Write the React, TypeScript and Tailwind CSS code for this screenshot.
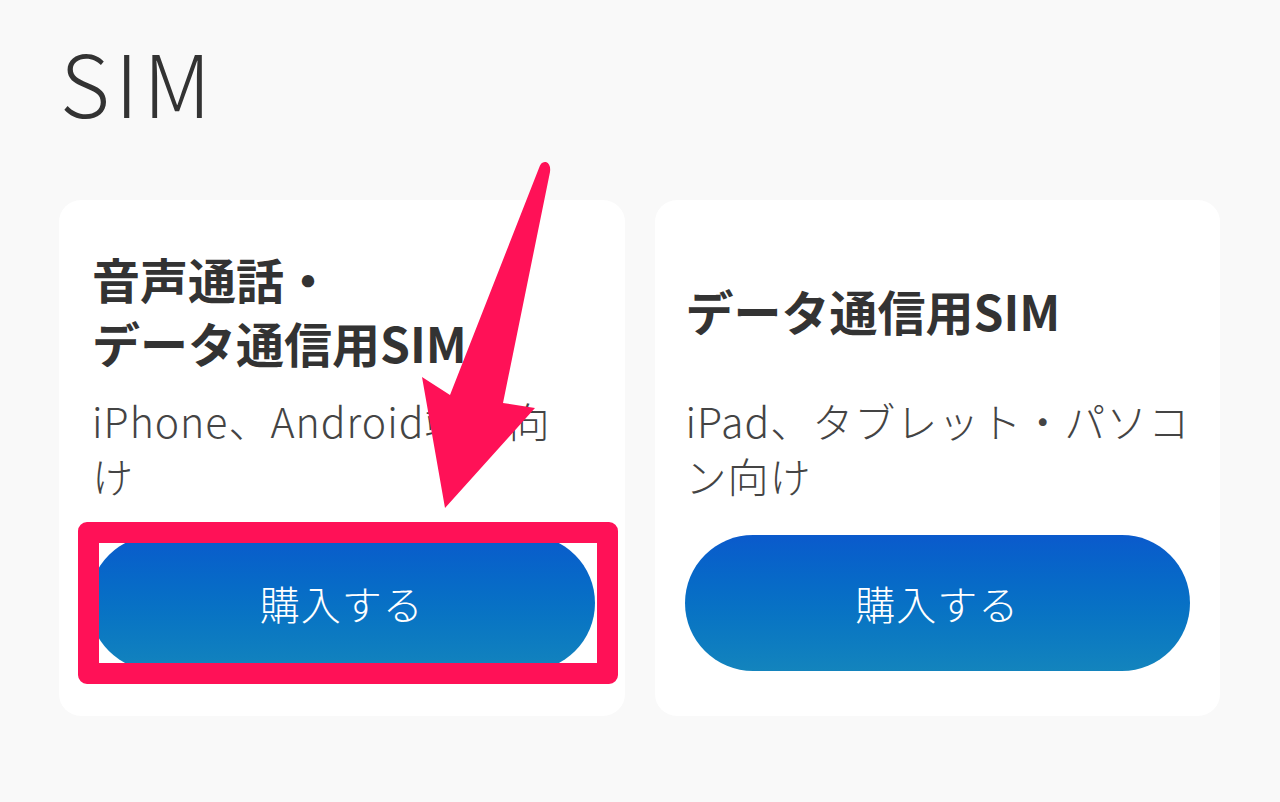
import React from "react";

const font = { fontFamily: '"Noto Sans CJK JP", "Noto Sans", sans-serif' };

function BuyButton() {
  return (
    <div className="h-[136px] w-full rounded-full bg-gradient-to-b from-[#0b5acc] to-[#1384bd] flex items-center justify-center">
      <span className="text-[40px] font-light text-white leading-none tracking-[1px]">購入する</span>
    </div>
  );
}

export default function App() {
  return (
    <div className="relative w-full h-[802px] overflow-hidden bg-[#f9f9f9]" style={font}>
      <div className="pl-[60px] pt-[38px] h-[200px]">
        <h1 className="text-[86px] font-light leading-none text-[#333333] tracking-[5px]">SIM</h1>
      </div>
      <div className="grid grid-cols-2 gap-[30px] pl-[59px] pr-[60px]">
        <div className="bg-white rounded-[22px] pt-[46px] pb-[45px] px-[30px]">
          <div className="h-[128px] flex items-center pl-[3px]">
            <h2 className="text-[48px] font-bold leading-[64px] text-[#333333]">
              音声通話・
              <br />
              データ通信用SIM
            </h2>
          </div>
          <p className="mt-[19px] pl-[3px] text-[41px] font-light leading-[55px] tracking-[1px] text-[#444444] whitespace-nowrap">
            iPhone、Android端末向
            <br />
            け
          </p>
          <div className="mt-[32px]">
            <BuyButton />
          </div>
        </div>
        <div className="bg-white rounded-[22px] pt-[46px] pb-[45px] px-[30px]">
          <div className="h-[128px] flex items-center pl-[1px]">
            <h2 className="text-[48px] font-bold leading-[64px] text-[#333333]">データ通信用SIM</h2>
          </div>
          <p className="mt-[19px] pl-[1px] text-[41px] font-light leading-[55px] tracking-[1px] text-[#444444] whitespace-nowrap">
            iPad、タブレット・パソコ
            <br />
            ン向け
          </p>
          <div className="mt-[32px]">
            <BuyButton />
          </div>
        </div>
      </div>

      <div className="absolute left-[78px] top-[522px] w-[540px] h-[162px] border-[21px] border-[#ff1157] rounded-[9px] pointer-events-none" />

      <svg className="absolute inset-0 pointer-events-none" width="1280" height="802" viewBox="0 0 1280 802">
        <path
          d="M 539 168 Q 541 161 546 162 Q 551 164 550 172 L 503 403 L 535 408 L 445 508 L 422 377 L 450 395 Z"
          fill="#ff1157"
        />
      </svg>
    </div>
  );
}
